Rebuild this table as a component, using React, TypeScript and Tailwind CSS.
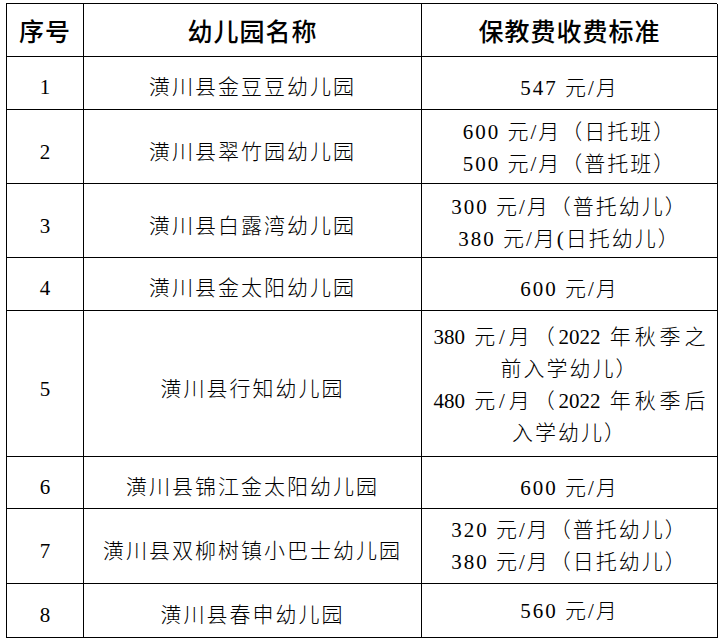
const body = "font-['Liberation_Serif','Noto_Sans_CJK_SC',serif] font-light text-black"

type Row = {
  no: string
  name: string
  fee: string[]
  h: string
  namePad: string
  feePad: string
  wide?: boolean
}

const rows: Row[] = [
  { no: "1", name: "潢川县金豆豆幼儿园", fee: ["547 元/月"], h: "h-[53px]", namePad: "pt-[10px]", feePad: "pt-[10px]" },
  { no: "2", name: "潢川县翠竹园幼儿园", fee: ["600 元/月（日托班）", "500 元/月（普托班）"], h: "h-[74px]", namePad: "pt-[12px]", feePad: "pt-[3px]" },
  { no: "3", name: "潢川县白露湾幼儿园", fee: ["300 元/月（普托幼儿）", "380 元/月(日托幼儿）"], h: "h-[74px]", namePad: "pt-[12px]", feePad: "pt-[4px]" },
  { no: "4", name: "潢川县金太阳幼儿园", fee: ["600 元/月"], h: "h-[53px]", namePad: "pt-[10px]", feePad: "pt-[10px]" },
  {
    no: "5",
    name: "潢川县行知幼儿园",
    fee: ["380 元/月（2022 年秋季之", "前入学幼儿）", "480 元/月（2022 年秋季后", "入学幼儿）"],
    h: "h-[146px]",
    namePad: "pt-[12px]",
    feePad: "pt-[3px]",
    wide: true,
  },
  { no: "6", name: "潢川县锦江金太阳幼儿园", fee: ["600 元/月"], h: "h-[52px]", namePad: "pt-[10px]", feePad: "pt-[10px]" },
  { no: "7", name: "潢川县双柳树镇小巴士幼儿园", fee: ["320 元/月（普托幼儿）", "380 元/月（日托幼儿）"], h: "h-[75px]", namePad: "pt-[12px]", feePad: "pt-[0px]" },
  { no: "8", name: "潢川县春申幼儿园", fee: ["560 元/月"], h: "h-[54px]", namePad: "pt-[10px]", feePad: "pt-[1px]" },
]

function FeeLines({ row }: { row: Row }) {
  return (
    <div className="flex flex-col items-center leading-[32px] text-[21px] tracking-[2px]">
      {row.fee.map((line, i) =>
        row.wide && i % 2 === 0 ? (
          <div key={i} className="w-[272px] text-justify [text-align-last:justify] tracking-normal">
            {line}
          </div>
        ) : (
          <div key={i}>{line}</div>
        )
      )}
    </div>
  )
}

export default function App() {
  return (
    <div className="w-[726px] h-[639px] bg-white pl-[6px] pt-[3px]">
      <div className="grid grid-cols-[77px_338px_296px] w-[711px] border-t border-l border-black">
        {/* header */}
        <div className="h-[53px] border-r border-b border-black flex items-center justify-center pt-[2px] font-['Noto_Sans_CJK_SC',sans-serif] font-medium text-[25px] tracking-[1px]">
          序号
        </div>
        <div className="h-[53px] border-r border-b border-black flex items-center justify-center pt-[2px] font-['Noto_Sans_CJK_SC',sans-serif] font-medium text-[25px] tracking-[1px]">
          幼儿园名称
        </div>
        <div className="h-[53px] border-r border-b border-black flex items-center justify-center pt-[2px] font-['Noto_Sans_CJK_SC',sans-serif] font-medium text-[25px] tracking-[1px]">
          保教费收费标准
        </div>

        {rows.map((r) => (
          <div key={r.no} className="contents">
            <div className={`${r.h} ${r.namePad} ${body} border-r border-b border-black flex items-center justify-center text-[21px]`}>
              {r.no}
            </div>
            <div className={`${r.h} ${r.namePad} ${body} border-r border-b border-black flex items-center justify-center text-[21px] tracking-[2px]`}>
              {r.name}
            </div>
            <div className={`${r.h} ${r.feePad} ${body} border-r border-b border-black flex items-center justify-center`}>
              <FeeLines row={r} />
            </div>
          </div>
        ))}
      </div>
    </div>
  )
}
